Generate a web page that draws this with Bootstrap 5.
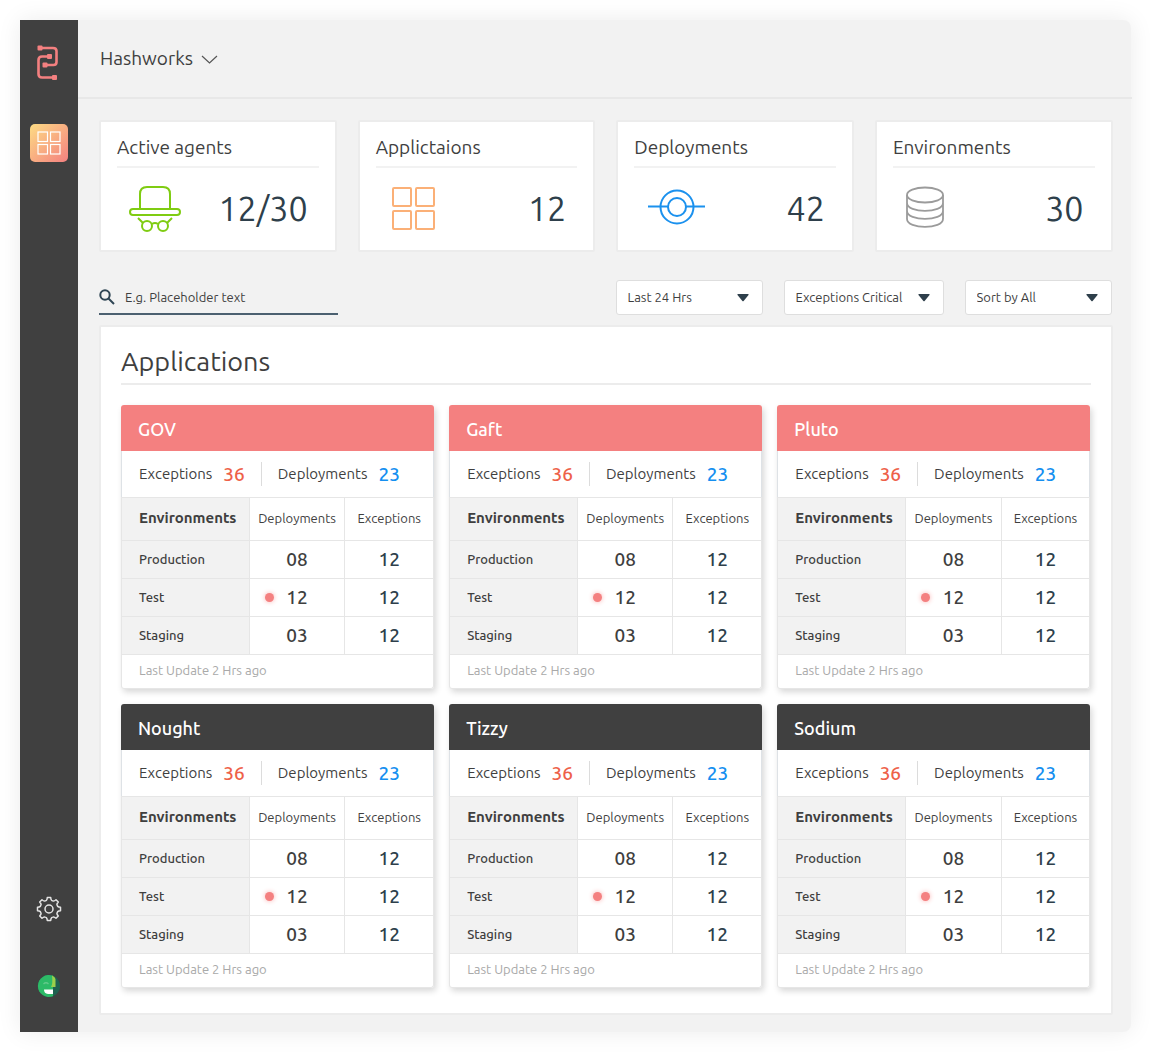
<!DOCTYPE html>
<html lang="en">
<head>
<meta charset="utf-8">
<meta name="viewport" content="width=device-width, initial-scale=1">
<title>Hashworks</title>
<link rel="stylesheet" href="https://cdn.jsdelivr.net/npm/bootstrap@5.3.0/dist/css/bootstrap.min.css">
<style>
  :root { --ink: #3f3f3f; --navy: #2e3f4b; --coral: #f48080; --line: #e6e6e6; --canvas: #f2f2f2; }
  body { background: #fff; color: var(--ink); font-family: Ubuntu, "Noto Sans", sans-serif; font-size: 15px; line-height: 20px; padding: 20px 19px 20px 20px; }
  .shell { min-height: calc(100vh - 40px); background: var(--canvas); box-shadow: 0 0 24px rgba(0, 0, 0, .08); border-radius: 0 8px 8px 0; }
  .rail { width: 58px; background: #404040; padding: 24px 0 33px; }
  .rail-tile { width: 38px; height: 38px; margin-top: 42px; border-radius: 5px; background: linear-gradient(135deg, #fddc84, #f48080); }
  .rail-gear { margin-bottom: 51px; }
  .topbar { height: 79px; padding: 0 22px 2px; border-bottom: 2px solid #e8e8e8; }
  .org { font-size: 19px; line-height: 24px; color: var(--ink); }
  .work { padding: 21px 19px 17px 21px; }
  .g-stats { --bs-gutter-x: 21px; --bs-gutter-y: 21px; }
  .g-apps { --bs-gutter-x: 15px; --bs-gutter-y: 15px; }
  .stat { height: 132px; border: 2px solid #ececec; border-radius: 2px; background: #fff; padding: 11px 16px; }
  .stat h2 { font-size: 19px; line-height: 28px; font-weight: 400; padding-bottom: 5px; border-bottom: 2px solid var(--canvas); }
  .stat-num { font-size: 34px; line-height: 48px; color: var(--navy); padding-right: 11px; }
  .stat-body { height: 80px; padding-left: 11px; }
  .filters { margin-top: 28px; gap: 21px; padding-right: 1px; }
  .search { width: 239px; height: 35px; border-bottom: 2px solid #4b6070; }
  .search input, .picker { font-size: 13px; line-height: 20px; color: var(--ink); }
  .search input { background: none; border: 0; outline: 0; padding: 0 0 0 10px; }
  .search input::placeholder { color: var(--ink); opacity: 1; }
  .picker { width: 147px; height: 35px; padding: 0 11px 2px; border: 1px solid #dedede; border-radius: 3px; background: #fff url("data:image/svg+xml,%3Csvg xmlns='http://www.w3.org/2000/svg' width='12' height='8'%3E%3Cpath d='M1 0h10q1 0 .5 1L6.600 7q-.6.7-1.200 0L.5 1Q0 0 1 0z' fill='%232e3f4b'/%3E%3C/svg%3E") no-repeat right 13px center; appearance: none; }
  .picker-wide { width: 160px; }
  .panel { margin-top: 10px; border: 2px solid #ececec; border-radius: 2px; background: #fff; padding: 18px 20px 25px; }
  .panel h1 { font-size: 27px; line-height: 32px; font-weight: 400; padding-bottom: 6px; margin-bottom: 20px; border-bottom: 2px solid #ececec; }
  .app-card { border-radius: 3px; background: #fff; box-shadow: 2px 3px 6px rgba(0, 0, 0, .16); }
  .app-name { font-size: 18px; line-height: 24px; font-weight: 500; color: #fff; background: #404040; padding: 12px 17px 10px; border-radius: 3px 3px 0 0; }
  .is-critical .app-name { background: var(--coral); }
  .app-sum { height: 46px; padding: 0 17px 1px; }
  .app-sum b { font-size: 19px; font-weight: 500; margin-left: 11px; }
  .n-exc { color: #ee6149; }
  .n-dep { color: #158ff0; }
  .rule { width: 1px; height: 24px; background: #dcdcdc; }
  .env { table-layout: fixed; width: 100%; text-align: center; border: 1px solid var(--line); border-collapse: collapse; }
  .env th, .env td { border: 1px solid var(--line); padding: 0 0 2px; height: 38px; }
  .env thead th { height: 43px; font-size: 13px; font-weight: 400; }
  .env th:first-child { width: 41%; text-align: left; padding-left: 17px; background: var(--canvas); }
  .env thead th:first-child { font-size: 15px; font-weight: 700; }
  .env tbody th { font-size: 13px; font-weight: 500; }
  .env td { font-size: 19px; font-weight: 500; }
  .env .c-exc { width: 28.500%; }
  .env td.c-exc { color: var(--navy); }
  .alert-dot { width: 9px; height: 9px; left: 15px; top: 50%; margin-top: -5px; border-radius: 50%; background: var(--coral); box-shadow: 0 0 5px #f9b0b0; }
  .app-foot { height: 34px; padding: 5px 17px; font-size: 13px; color: #a9a9a9; border: solid var(--line); border-width: 0 1px 1px; border-radius: 0 0 3px 3px; }
</style>
</head>
<body>
<div class="shell d-flex">
  <nav class="rail d-flex flex-column align-items-center flex-shrink-0" aria-label="Main">
    <a href="#" aria-label="Home" class="d-block lh-1">
      <svg width="24" height="38" viewBox="1 0 24 38" fill="none" stroke="#f48080" stroke-width="2.600"><path d="M4 4H17Q20.500 4 20.500 7V18Q20.500 21 17.500 21H9M13 12.500H6Q2.500 12.500 2.500 16V30Q2.500 33.500 6 33.500H18"/><g fill="#f48080" stroke="none"><rect x="1.500" y="1.500" width="5" height="5" rx="1"/><rect x="11" y="10" width="5" height="5" rx="1"/><rect x="6.500" y="18.500" width="5" height="5" rx="1"/><rect x="16" y="31" width="5" height="5" rx="1"/></g></svg>
    </a>
    <a href="#" class="rail-tile d-flex align-items-center justify-content-center" aria-label="Dashboard">
      <svg width="24" height="24" viewBox="0 0 24 24" fill="none" stroke="#fff" stroke-width="1.200"><rect x="1" y="1" width="9.500" height="9.500"/><rect x="13.500" y="1" width="9.500" height="9.500"/><rect x="1" y="13.500" width="9.500" height="9.500"/><rect x="13.500" y="13.500" width="9.500" height="9.500"/></svg>
    </a>
    <a href="#" class="rail-gear mt-auto lh-1" aria-label="Settings">
      <svg width="26" height="26" viewBox="-13 -13 26 26" fill="none" stroke="#e4e4e4" stroke-width="1.500" stroke-linejoin="round"><path d="M-2.600-8.700Q-1.800-9.500-1.700-11.500H1.700Q1.800-9.500 2.600-8.700Q3.500-8.200 4.600-7.900Q5.500-8 7-9.300L9.300-7Q8-5.500 7.900-4.600Q8.200-3.500 8.700-2.600Q9.500-1.800 11.500-1.700V1.700Q9.500 1.800 8.700 2.600Q8.200 3.500 7.900 4.600Q8 5.500 9.300 7L7 9.300Q5.500 8 4.600 7.900Q3.500 8.200 2.600 8.700Q1.800 9.500 1.700 11.500H-1.700Q-1.800 9.500-2.600 8.700Q-3.500 8.200-4.600 7.900Q-5.500 8-7 9.300L-9.300 7Q-8 5.500-7.900 4.600Q-8.200 3.500-8.700 2.600Q-9.500 1.800-11.500 1.700V-1.700Q-9.500-1.800-8.700-2.600Q-8.200-3.500-7.900-4.600Q-8-5.500-9.300-7L-7-9.300Q-5.500-8-4.600-7.900Q-3.500-8.200-2.600-8.700Z"/><circle r="4"/></svg>
    </a>
    <a href="#" class="lh-1" aria-label="Profile">
      <svg width="26" height="26" viewBox="0 0 26 26"><circle cx="13" cy="13" r="11" fill="#1f6150"/><path d="M17 2.800A11 11 0 1 0 17 23.200Z" fill="#2dba67"/><path d="M16 2.500Q19 3.500 19.500 6V14H15Q17 11 16 2.500Z" fill="#9bd04b"/><path d="M7.500 11Q10 8.500 12.500 11" fill="none" stroke="#63c98a" stroke-width="1.300"/><path d="M8 16.500H17V21H12Q8 20.500 8 16.500Z" fill="#fff"/></svg>
    </a>
  </nav>

  <div class="flex-grow-1">
    <header class="topbar d-flex align-items-center">
      <button type="button" class="org btn p-0 border-0 d-flex align-items-center gap-2">Hashworks
        <svg width="18" height="12" viewBox="0 0 18 12" fill="none" stroke="#555" stroke-width="1.200"><path d="M1 4L8.500 11L16 4"/></svg>
      </button>
    </header>

    <main class="work">
      <section class="row row-cols-2 row-cols-lg-4 g-stats" aria-label="Totals">
        <div class="col"><div class="stat">
          <h2 class="mb-0">Active agents</h2>
          <div class="stat-body d-flex align-items-center justify-content-between">
            <svg width="54" height="50" viewBox="0 0 54 50" fill="none" stroke="#7fcc12" stroke-width="2"><path d="M12 26V11Q12 4 19 4H35Q42 4 42 11V26"/><rect x="2" y="26" width="50" height="6" rx="3"/><circle cx="19" cy="43" r="5"/><circle cx="35" cy="43" r="5"/><path d="M24 41Q27 39 30 41M10 35L15 40M44 35L39 40"/></svg>
            <span class="stat-num">12/30</span>
          </div>
        </div></div>
        <div class="col"><div class="stat">
          <h2 class="mb-0">Applictaions</h2>
          <div class="stat-body d-flex align-items-center justify-content-between">
            <svg width="54" height="50" viewBox="0 0 54 50" fill="none" stroke="#fbb077" stroke-width="2"><rect x="6" y="5" width="18" height="18" rx="1"/><rect x="29" y="5" width="18" height="18" rx="1"/><rect x="6" y="28" width="18" height="18" rx="1"/><rect x="29" y="28" width="18" height="18" rx="1"/></svg>
            <span class="stat-num">12</span>
          </div>
        </div></div>
        <div class="col"><div class="stat">
          <h2 class="mb-0">Deployments</h2>
          <div class="stat-body d-flex align-items-center justify-content-between">
            <svg width="60" height="50" viewBox="0 0 60 50" fill="none" stroke="#1b91ee" stroke-width="2"><circle cx="32" cy="24" r="16.500"/><circle cx="32" cy="24" r="9"/><path d="M3 23.500H23M41 23.500H60"/></svg>
            <span class="stat-num">42</span>
          </div>
        </div></div>
        <div class="col"><div class="stat">
          <h2 class="mb-0">Environments</h2>
          <div class="stat-body d-flex align-items-center justify-content-between">
            <svg width="54" height="50" viewBox="0 0 54 50" fill="none" stroke="#9b9b9b" stroke-width="1.800"><ellipse cx="21" cy="12" rx="18" ry="7.500"/><path d="M3 12V36C3 46.500 39 46.500 39 36V12M3 20C3 30.500 39 30.500 39 20M3 28C3 38.500 39 38.500 39 28"/></svg>
            <span class="stat-num">30</span>
          </div>
        </div></div>
      </section>

      <form class="filters d-flex flex-wrap align-items-center">
        <div class="search d-flex align-items-center me-auto">
          <svg class="flex-shrink-0" width="16" height="16" viewBox="0 0 16 16" fill="none" stroke="#2e4554" stroke-width="2"><circle cx="6" cy="6" r="4.700"/><path d="M9.500 9.500L15 15"/></svg>
          <input class="flex-grow-1" type="search" aria-label="Search applications" placeholder="E.g. Placeholder text">
        </div>
        <select class="picker" aria-label="Period"><option>Last 24 Hrs</option></select>
        <select class="picker picker-wide" aria-label="Severity"><option>Exceptions Critical</option></select>
        <select class="picker" aria-label="Sort order"><option>Sort by All</option></select>
      </form>

      <section class="panel">
        <h1>Applications</h1>
        <div id="apps" class="row row-cols-1 row-cols-md-2 row-cols-lg-3 g-apps"></div>
      </section>
    </main>
  </div>
</div>

<script>
  const apps = [
    { name: "GOV", critical: true }, { name: "Gaft", critical: true }, { name: "Pluto", critical: true },
    { name: "Nought" }, { name: "Tizzy" }, { name: "Sodium" }
  ];
  const environments = [["Production", "08", "12"], ["Test", "12", "12", true], ["Staging", "03", "12"]];
  const envRows = environments.map(([env, dep, exc, alerting]) => `
    <tr><th scope="row">${env}</th>
      <td class="position-relative">${alerting ? '<span class="alert-dot position-absolute"></span>' : ''}${dep}</td>
      <td class="c-exc">${exc}</td></tr>`).join("");
  document.getElementById("apps").innerHTML = apps.map(app => `
    <div class="col"><article class="app-card ${app.critical ? "is-critical" : ""}">
      <h2 class="app-name mb-0">${app.name}</h2>
      <div class="app-sum d-flex align-items-center border-start border-end">
        <span>Exceptions</span><b class="n-exc">36</b>
        <span class="rule mx-3"></span>
        <span>Deployments</span><b class="n-dep">23</b>
      </div>
      <table class="env">
        <thead><tr><th scope="col">Environments</th><th scope="col">Deployments</th><th scope="col" class="c-exc">Exceptions</th></tr></thead>
        <tbody>${envRows}</tbody>
      </table>
      <div class="app-foot">Last Update 2 Hrs ago</div>
    </article></div>`).join("");
</script>
<script src="https://cdn.jsdelivr.net/npm/bootstrap@5.3.0/dist/js/bootstrap.bundle.min.js"></script>
</body>
</html>
